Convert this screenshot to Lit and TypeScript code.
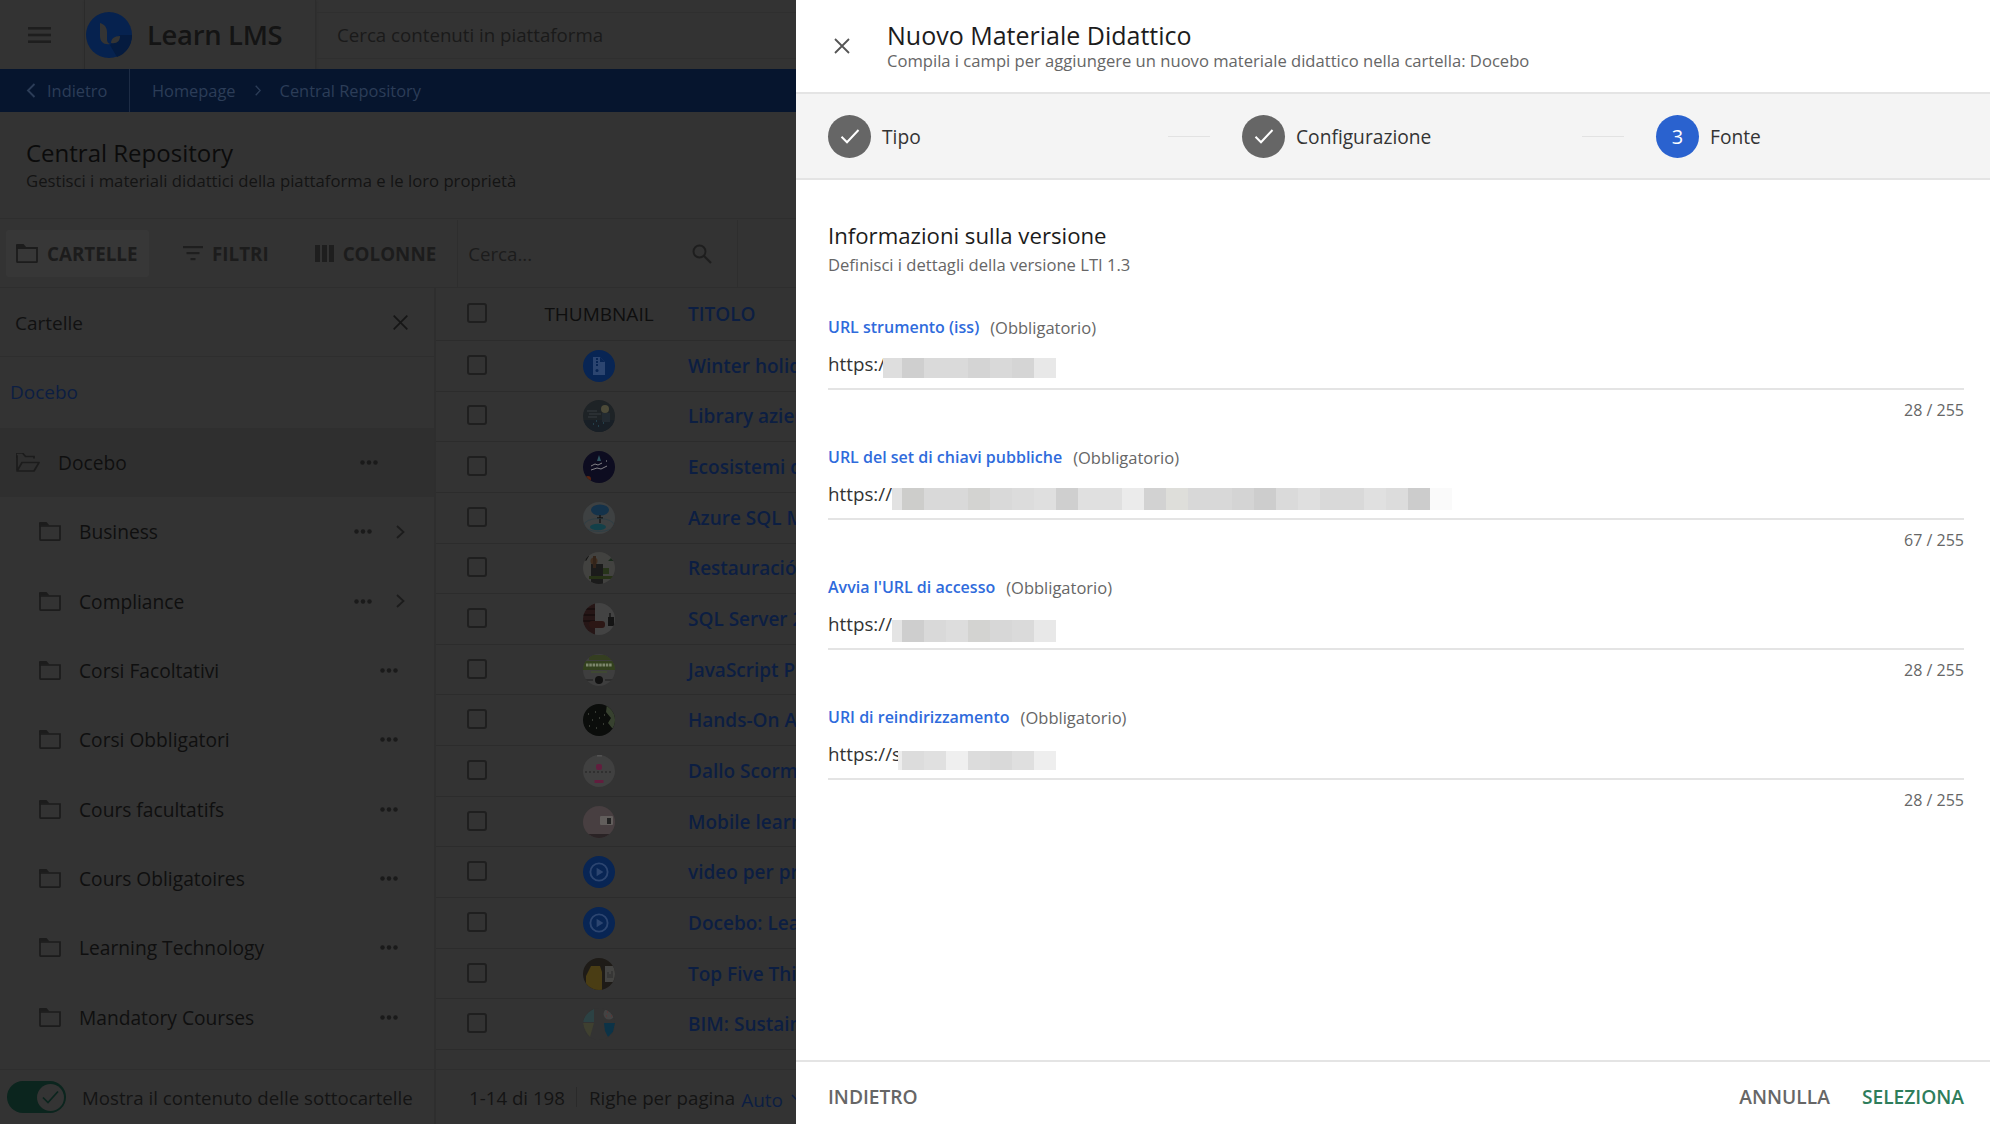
import { LitElement, html, css, svg } from 'lit';
import { customElement } from 'lit/decorators.js';

type Block = [number, string];

// pixelated blocks that cover the redacted part of each url
const field1: Block[] = [[19, '#dedede'], [22, '#cfcfcf'], [44, '#dadada'], [22, '#d4d4d4'], [22, '#d9d9d9'], [22, '#d5d5d5'], [22, '#e8e8e8']];
const field2: Block[] = [
  [10, '#e2e2e2'], [22, '#cdcdcb'], [44, '#d9d9d9'], [22, '#d3d3d1'], [22, '#d9d9d9'], [22, '#dcdcdc'], [22, '#dfdfdf'], [22, '#cfcfcf'],
  [44, '#e0e0e0'], [22, '#ebebeb'], [22, '#d2d2d2'], [22, '#dededa'], [44, '#d8d8d8'], [22, '#d4d4d4'], [22, '#cdcdcd'],
  [22, '#dadada'], [22, '#dfdfdf'], [44, '#d9d9d9'], [22, '#e0e0e0'], [22, '#dcdcdc'], [22, '#cccccc'], [22, '#fafafa'],
];
const field3: Block[] = [[10, '#e4e4e4'], [22, '#cecece'], [22, '#d9d9d9'], [22, '#dddddd'], [22, '#d3d3d1'], [22, '#d7d7d7'], [22, '#dadada'], [22, '#e8e8e8']];
const field4: Block[] = [[4, '#ededed'], [22, '#dcdcdc'], [22, '#e0e0e0'], [22, '#efefef'], [22, '#dcdcdc'], [22, '#d9d9d9'], [22, '#dfdfdf'], [22, '#eeeeee']];

const fields = [
  { label: 'URL strumento (iss)', value: 'https:/', clip: 55, blocks: field1, h: 20, down: 0, count: '28 / 255' },
  { label: 'URL del set di chiavi pubbliche', value: 'https://', clip: 64, blocks: field2, h: 22, down: 0, count: '67 / 255' },
  { label: "Avvia l'URL di accesso", value: 'https://', clip: 64, blocks: field3, h: 22, down: 2, count: '28 / 255' },
  { label: 'URI di reindirizzamento', value: 'https://s', clip: 70, blocks: field4, h: 19, down: 3, count: '28 / 255' },
];

const folders = ['Corsi Facoltativi', 'Corsi Obbligatori', 'Cours facultatifs', 'Cours Obligatoires', 'Learning Technology', 'Mandatory Courses'];

const playIcon = svg`<rect width="32" height="32" fill="#082554"/><circle cx="16" cy="16" r="8.600" fill="none" stroke="#2c4570" stroke-width="1.900"/><path d="M13.600 11.800 20.400 16l-6.800 4.200z" fill="#2c4570"/>`;

const rows = [
  { title: 'Winter holiday training', thumb: svg`<rect width="32" height="32" fill="#082554"/><path d="M10 7h7l5 5v13H10z" fill="#2c4570"/><path d="M17 7v5h5" fill="#082554"/><path d="M13 8h2v2h-2zm0 3h2v2h-2zm0 3h2v2h-2z" fill="#082554"/><circle cx="14" cy="20.500" r="1.500" fill="#082554"/>` },
  { title: 'Library aziendale', thumb: svg`<rect width="32" height="32" fill="#1e2326"/><rect y="20" width="32" height="12" fill="#181f26"/><circle cx="22" cy="9" r="4" fill="#4c4a38"/><rect x="19" y="13" width="8" height="9" fill="#222a31"/><path d="M4 11h10M6 14h12M5 17h9" stroke="#3c4248" stroke-width=".8"/><path d="M10 24h1M15 26h1M20 23h1M13 21h1" stroke="#2e5f6c" stroke-width="1"/>` },
  { title: 'Ecosistemi digitali', thumb: svg`<rect width="32" height="32" fill="#0d0c20"/><path d="M16 4l2 6h-4z" fill="#2f5560"/><path d="M8 15l4-2 3 1 4-2M8 19l6-2 4 1 6-3" stroke="#8e8e92" stroke-width=".9" fill="none"/><path d="M23 10h1" stroke="#999" stroke-width="1"/><circle cx="5" cy="28" r="3" fill="#5a2410"/>` },
  { title: 'Azure SQL Managed', thumb: svg`<rect width="32" height="32" fill="#3e4142"/><ellipse cx="17" cy="8" rx="9" ry="5.500" fill="#14324a"/><path d="M17 13v8M14 16h6" stroke="#141414" stroke-width="1.300"/><ellipse cx="15" cy="25" rx="8" ry="3.200" fill="#134049"/><ellipse cx="16" cy="23" rx="15" ry="6.500" fill="none" stroke="#2a3e46" stroke-width=".7"/>` },
  { title: 'Restauración', thumb: svg`<rect width="32" height="32" fill="#424240"/><path d="M2 8l3-5 1 1-3 5z" fill="#111"/><rect x="8" y="12" width="12" height="20" fill="#1b1b1b"/><circle cx="11" cy="9" r="3.500" fill="#3f2d1f"/><rect x="10" y="4" width="3" height="12" fill="#33241a"/><rect x="20" y="16" width="6" height="6" fill="#27341a"/><rect x="6" y="24" width="26" height="3" fill="#263116"/><path d="M25 9l3-3 3 3z" fill="#1a2a1c"/>` },
  { title: 'SQL Server 2019', thumb: svg`<rect width="32" height="32" fill="#434343"/><rect width="12" height="32" fill="#261616"/><path d="M0 6h12M0 12h12M0 18h12" stroke="#0f0909"/><rect x="6" y="18" width="16" height="7" rx="3" fill="#2c1715"/><rect x="25" y="14" width="6" height="9" fill="#141414"/><rect x="26" y="10" width="2" height="4" fill="#222"/>` },
  { title: 'JavaScript Pro', thumb: svg`<rect width="32" height="32" fill="#3e3e3e"/><rect x="6" y="1" width="25" height="5" fill="#343e20"/><rect y="7" width="32" height="9" fill="#33411e"/><path d="M3 11h26" stroke="#7c866c" stroke-width="3" stroke-dasharray="2.500 .8"/><rect x="8" y="17" width="16" height="2" fill="#3f4833"/><circle cx="16" cy="26" r="4" fill="#111"/><path d="M0 26h10M22 26h8" stroke="#1c1c1c"/>` },
  { title: 'Hands-On Azure', thumb: svg`<rect width="32" height="32" fill="#0b0d0b"/><path d="M24 0h8v24h-3l-4-5 3-5-5-6z" fill="#37412f"/><path d="M5 10h.8M12 8h.8M9 16h.8M16 14h.8M20 20h.8M13 24h.8M6 22h.8M21 11h.8" stroke="#85897a" stroke-width=".9"/>` },
  { title: 'Dallo Scorm', thumb: svg`<rect width="32" height="32" fill="#404040"/><rect x="14" y="0" width="5" height="1.500" fill="#555"/><rect x="13" y="9" width="6" height="6" rx="2" fill="#611e3e"/><path d="M2 17h28" stroke="#202020" stroke-dasharray="2 2" stroke-width="1.200"/><rect x="11.500" y="25" width="9" height="3" fill="#611e3e"/>` },
  { title: 'Mobile learning', thumb: svg`<rect width="32" height="32" fill="#483f41"/><rect y="28" width="32" height="4" fill="#2a2325"/><rect x="17" y="10" width="13" height="9" rx="1" fill="#625e5c"/><rect x="24" y="12" width="4" height="6" fill="#222"/>` },
  { title: 'video per presentazione', thumb: playIcon },
  { title: 'Docebo: Learning', thumb: playIcon },
  { title: 'Top Five Things', thumb: svg`<rect width="32" height="32" fill="#1e1b17"/><path d="M3 18l5-10h9l2 6v18H3z" fill="#4a3d14"/><rect x="22" y="8" width="10" height="16" fill="#444442"/><path d="M25 14v6M27 16v4M29 13v7" stroke="#2a2a2a"/>` },
  { title: 'BIM: Sustainable', thumb: svg`<rect width="32" height="32" fill="#333"/><path d="M11 1C6 3 1 8 0 14h11z" fill="#2c4244"/><path d="M0 15h11l-4 14C4 26 1 21 0 15z" fill="#3f4030"/><circle cx="26" cy="6" r="5.500" fill="#434343"/><path d="M24 4h1M27 3h1M28 8h1M23 8h1" stroke="#6a2a2a"/><path d="M21 15h11l-2 9-5 5-3-6z" fill="#0c3347"/>` },
];

const folderIcon = html`<svg class="folder" width="22" height="19" viewBox="0 0 22 19" fill="none"><path d="M1 4h20v13.500a.6.6 0 0 1-.6.6H1.600a.6.6 0 0 1-.6-.6z" stroke="#1c1c1c" stroke-width="1.700"/><path d="M0 5V1.200C0 .5.500 0 1.200 0h6.300l3 3.500H1.500L1 5z" fill="#1c1c1c"/></svg>`;
const folderOpen = html`<svg class="folder" width="24" height="19" viewBox="0 0 24 19" fill="none"><path d="M1 17V2.200" stroke="#1c1c1c" stroke-width="1.700"/><path d="M0 5V1.200C0 .5.500 0 1.200 0h5.300l3 3.500H18v2" fill="none" stroke="#1c1c1c" stroke-width="1.700"/><path d="M1 18h17l5-8.500H6z" stroke="#1c1c1c" stroke-width="1.700" stroke-linejoin="round"/></svg>`;
const dots = html`<svg class="dots" width="18" height="5" viewBox="0 0 18 5"><circle cx="2.500" cy="2.500" r="2.200"/><circle cx="9" cy="2.500" r="2.200"/><circle cx="15.500" cy="2.500" r="2.200"/></svg>`;
const chevron = html`<svg class="chev" width="9" height="14" viewBox="0 0 9 14" fill="none"><path d="M1 1l6.500 6L1 13" stroke="#1c1c1c" stroke-width="1.800"/></svg>`;
const stepCheck = html`<svg width="24" height="24" viewBox="0 0 24 24" fill="none"><path d="M3.500 12.800l5.500 5.500L20.500 6" stroke="#fff" stroke-width="2"/></svg>`;

@customElement('app-root')
export class AppRoot extends LitElement {
  static styles = css`
    :host {
      display: block;
      width: 1990px;
      height: 1124px;
      position: relative;
      overflow: hidden;
      font-family: 'Open Sans', 'Noto Sans', sans-serif;
      background: #333;
      color: #111;
    }

    .page {
      display: flex;
      flex-direction: column;
      height: 1124px;
    }

    /* top bar */
    .topbar {
      display: flex;
      height: 69px;
      flex: none;
    }
    .burger {
      width: 85px;
      border-right: 1px solid #2d2d2d;
      box-sizing: border-box;
      display: flex;
      align-items: center;
      padding-left: 28px;
    }
    .logo-box {
      width: 231px;
      display: flex;
      align-items: center;
      gap: 15px;
      padding-left: 1px;
      box-sizing: border-box;
      border-right: 1px solid #2d2d2d;
      box-shadow: 0 1px 2px #2a2a2a;
    }
    .logo-text {
      font-size: 27.400px;
      font-weight: 600;
      color: #141414;
      letter-spacing: -0.3px;
    }
    .top-search {
      flex: 1;
      margin-top: 12px;
      height: 47px;
      border-top: 1px solid #2f2f2f;
      border-bottom: 1px solid #2f2f2f;
      box-sizing: border-box;
      display: flex;
      align-items: center;
      padding: 0 0 2px 21px;
      font-size: 18.700px;
      color: #1a1a1a;
    }

    /* breadcrumb bar */
    .crumbs {
      height: 43px;
      flex: none;
      background: #06152e;
      display: flex;
      align-items: center;
      font-size: 16.400px;
      color: #2c3d58;
    }
    .back {
      width: 130px;
      height: 100%;
      border-right: 1px solid #1d2c45;
      display: flex;
      align-items: center;
      gap: 11px;
      padding-left: 26px;
      box-sizing: border-box;
    }
    .trail {
      display: flex;
      align-items: center;
      padding-left: 22px;
      gap: 19px;
    }

    /* page heading */
    .heading {
      height: 106px;
      flex: none;
      box-sizing: border-box;
      padding: 25px 0 0 26px;
    }
    .heading h1 {
      margin: 0;
      font-size: 24px;
      line-height: 32px;
      font-weight: 400;
      color: #0b0b0b;
    }
    .heading p {
      margin: 0;
      font-size: 16.700px;
      line-height: 24px;
      color: #141414;
    }

    /* toolbar */
    .toolbar {
      height: 70px;
      flex: none;
      display: flex;
      align-items: center;
      border-top: 1px solid #2e2e2e;
      border-bottom: 1px solid #2e2e2e;
      box-sizing: border-box;
      font-size: 18.800px;
      font-weight: 700;
      color: #1c1c1c;
      padding-top: 1px;
    }
    .tool {
      display: flex;
      align-items: center;
      height: 47px;
      gap: 9px;
      box-sizing: border-box;
    }
    .tool.active {
      width: 143px;
      margin-left: 6px;
      padding-left: 10px;
      background: #373737;
      border-radius: 2px;
    }
    .tool.filter {
      margin-left: 34px;
    }
    .tool.cols {
      margin-left: 46px;
    }
    .list-search {
      margin-left: 21px;
      width: 281px;
      height: 100%;
      box-sizing: border-box;
      border-left: 1px solid #2e2e2e;
      border-right: 1px solid #2e2e2e;
      display: flex;
      align-items: center;
      justify-content: space-between;
      padding: 0 25px 0 10px;
      font-size: 18.700px;
      font-weight: 400;
      color: #1c1c1c;
    }

    /* content below the toolbar */
    .main {
      flex: 1;
      display: flex;
      min-height: 0;
    }
    aside {
      width: 436px;
      flex: none;
      display: flex;
      flex-direction: column;
      border-right: 2px solid #2e2e2e;
      box-sizing: border-box;
    }
    .side-head {
      height: 69px;
      flex: none;
      display: flex;
      align-items: center;
      justify-content: space-between;
      padding: 1px 26px 0 15px;
      font-size: 19px;
      font-weight: 500;
      color: #111;
      border-bottom: 1px solid #2e2e2e;
      box-sizing: border-box;
    }
    .root-link {
      height: 70px;
      flex: none;
      display: flex;
      align-items: center;
      padding-left: 10px;
      font-size: 19px;
      color: #0c1e42;
      font-weight: 500;
    }
    .tree {
      flex: 1;
      padding-top: 1px;
    }
    .node {
      height: 69.300px;
      display: flex;
      align-items: center;
      padding-left: 39px;
      font-size: 19.200px;
      font-weight: 500;
      color: #0f0f0f;
    }
    .node.selected {
      background: #2f2f2f;
      padding-left: 16px;
    }
    .node .name {
      flex: 1;
      margin-left: 18px;
    }
    .dots {
      fill: #1a1a1a;
      margin-right: 36px;
    }
    .node.selected .dots {
      margin-right: 56px;
    }
    .node.more .dots {
      margin-right: 24px;
    }
    .chev {
      margin-right: 29px;
    }
    .side-foot {
      height: 55px;
      flex: none;
      display: flex;
      align-items: center;
      gap: 16px;
      padding-left: 7px;
      border-top: 1px solid #2e2e2e;
      box-sizing: border-box;
      font-size: 18.700px;
      color: #141414;
    }
    .switch {
      position: relative;
      width: 59px;
      height: 32px;
      border-radius: 16px;
      background: #0b251e;
    }
    .knob {
      position: absolute;
      right: 2px;
      top: 2.500px;
      width: 27px;
      height: 27px;
      border-radius: 50%;
      background: #343434;
      display: flex;
      align-items: center;
      justify-content: center;
    }

    /* table */
    .table {
      flex: 1;
      min-width: 0;
      overflow: hidden;
      display: flex;
      flex-direction: column;
    }
    .tr {
      display: grid;
      grid-template-columns: 100px 126px 1fr;
      align-items: center;
      border-bottom: 1px solid #2c2c2c;
      box-sizing: border-box;
      height: 50.650px;
      font-size: 19px;
      font-weight: 600;
      white-space: nowrap;
    }
    .tr.head {
      height: 53px;
    }
    .tr .title {
      padding-left: 26px;
      color: #0c1e42;
    }
    .tr.head .tn {
      color: #0e0e0e;
      text-align: center;
      font-weight: 500;
    }
    .check {
      width: 20px;
      height: 20px;
      margin-left: 31px;
      margin-top: -2px;
      box-sizing: border-box;
      border: 2.500px solid #1f1f1f;
      border-radius: 3px;
    }
    .thumb {
      width: 32px;
      height: 32px;
      border-radius: 50%;
      overflow: hidden;
      margin-left: 47px;
    }
    .thumb svg {
      display: block;
    }
    .spacer {
      flex: 1;
    }
    .table-foot {
      height: 55px;
      flex: none;
      display: flex;
      align-items: center;
      padding-left: 33px;
      border-top: 1px solid #2e2e2e;
      box-sizing: border-box;
      font-size: 18.700px;
      color: #141414;
      white-space: nowrap;
    }
    .pipe {
      width: 1px;
      height: 20px;
      background: #2a2a2a;
      margin: 0 12px 0 11px;
    }
    .auto {
      margin: 0 8px 0 6px;
      color: #0c1e42;
      font-weight: 500;
      font-size: 19px;
      padding-top: 6px;
    }

    /* drawer on top of the dimmed page */
    .drawer {
      position: absolute;
      top: 0;
      right: 0;
      bottom: 0;
      width: 1194px;
      background: #fff;
      color: #333;
      display: flex;
      flex-direction: column;
    }
    .drawer-head {
      height: 94px;
      flex: none;
      display: flex;
      align-items: center;
      border-bottom: 2px solid #e4e4e4;
      box-sizing: border-box;
    }
    .close {
      width: 91px;
      flex: none;
      display: flex;
      justify-content: center;
      padding-bottom: 1px;
    }
    .drawer-head h2 {
      margin: 0;
      font-size: 25px;
      line-height: 30px;
      font-weight: 400;
      color: #1c1c1c;
    }
    .drawer-head p {
      margin: 0;
      font-size: 16.600px;
      line-height: 22px;
      color: #666;
    }
    .stepper {
      height: 86px;
      flex: none;
      display: flex;
      align-items: center;
      padding-left: 32px;
      background: #f4f4f4;
      border-bottom: 2px solid #e4e4e4;
      box-sizing: border-box;
    }
    .step {
      display: flex;
      align-items: center;
      gap: 11px;
      width: 340px;
      flex: none;
      font-size: 19.200px;
      font-weight: 500;
      color: #333;
      padding-top: 1px;
    }
    .circle {
      width: 43px;
      height: 43px;
      border-radius: 50%;
      background: #666;
      display: flex;
      align-items: center;
      justify-content: center;
      color: #fff;
      font-size: 20px;
      font-weight: 400;
      margin-top: -1px;
    }
    .circle.now {
      background: #2a62cf;
    }
    .link {
      width: 42px;
      height: 1px;
      flex: none;
      margin-right: 32px;
      background: #e2e2e2;
    }
    .body {
      flex: 1;
      padding: 39px 26px 0 32px;
    }
    .body h3 {
      margin: 0;
      font-size: 22.200px;
      line-height: 34px;
      font-weight: 400;
      color: #1c1c1c;
    }
    .body > p {
      margin: 0 0 38px;
      font-size: 16.600px;
      line-height: 24px;
      color: #666;
    }
    .field {
      height: 130px;
      box-sizing: border-box;
    }
    .label {
      display: flex;
      gap: 11px;
      font-size: 16px;
      line-height: 25px;
      font-weight: 600;
      color: #2f6bdc;
    }
    .label span {
      color: #666;
      font-weight: 400;
      font-size: 16.500px;
    }
    .value {
      height: 50px;
      padding-top: 12px;
      box-sizing: border-box;
      display: flex;
      align-items: flex-start;
      border-bottom: 2px solid #e4e4e4;
      font-size: 18.800px;
      line-height: 24px;
      color: #333;
    }
    .url {
      flex: none;
      overflow: hidden;
      white-space: nowrap;
    }
    .pix {
      display: flex;
      margin-top: 6px;
    }
    .count {
      margin-top: 9px;
      text-align: right;
      font-size: 16px;
      line-height: 22px;
      color: #666;
    }
    .drawer-foot {
      height: 64px;
      flex: none;
      display: flex;
      align-items: center;
      padding: 7px 26px 0 32px;
      border-top: 2px solid #e4e4e4;
      box-sizing: border-box;
      font-size: 19.200px;
      font-weight: 600;
      color: #666;
    }
    .drawer-foot .grow {
      flex: 1;
    }
    .drawer-foot .ok {
      margin-left: 32px;
      color: #2e7d5b;
    }
  `;

  private _row(r: { title: string; thumb: unknown }) {
    return html`<div class="tr">
      <div class="check"></div>
      <div class="thumb"><svg width="32" height="32" viewBox="0 0 32 32">${r.thumb}</svg></div>
      <div class="title">${r.title}</div>
    </div>`;
  }

  private _field(f: (typeof fields)[number]) {
    return html`<div class="field">
      <div class="label">${f.label}<span>(Obbligatorio)</span></div>
      <div class="value">
        <div class="url" style="width:${f.clip}px">${f.value}</div>
        <div class="pix" style="height:${f.h}px;transform:translateY(${f.down}px)">
          ${f.blocks.map(([w, c]) => html`<div style="width:${w}px;background:${c}"></div>`)}
        </div>
      </div>
      <div class="count">${f.count}</div>
    </div>`;
  }

  render() {
    return html`
      <div class="page">
        <div class="topbar">
          <div class="burger">
            <svg width="23" height="16" viewBox="0 0 23 16" fill="#1e1e1e"><rect width="23" height="2.600"/><rect y="6.700" width="23" height="2.600"/><rect y="13.400" width="23" height="2.600"/></svg>
          </div>
          <div class="logo-box">
            <svg width="46" height="46" viewBox="0 0 46 46">
              <circle cx="23" cy="23" r="23" fill="#06224f"/>
              <path d="M24 33l7 12a23 23 0 0 0 15-22h-12z" fill="#051b3f"/>
              <path d="M14 11c4 1 7 4 7 9v7c0 3 1 4 3 5-6 1-10-2-10-8z" fill="#343434"/>
              <path d="M25 31c0-4 3-7 9-7 0 5-3 8-9 7z" fill="#343434"/>
            </svg>
            <span class="logo-text">Learn LMS</span>
          </div>
          <div class="top-search">Cerca contenuti in piattaforma</div>
        </div>

        <div class="crumbs">
          <div class="back">
            <svg width="10" height="15" viewBox="0 0 10 15" fill="none"><path d="M8.500 1L2 7.500 8.500 14" stroke="#2c3d58" stroke-width="1.900"/></svg>
            Indietro
          </div>
          <div class="trail">
            <span>Homepage</span>
            <svg width="6" height="11" viewBox="0 0 6 11" fill="none"><path d="M.7 .7l4.500 4.800L.7 10.300" stroke="#2c3d58" stroke-width="1.300"/></svg>
            <span>Central Repository</span>
          </div>
        </div>

        <div class="heading">
          <h1>Central Repository</h1>
          <p>Gestisci i materiali didattici della piattaforma e le loro proprietà</p>
        </div>

        <div class="toolbar">
          <div class="tool active">
            <svg width="22" height="19" viewBox="0 0 22 19" fill="none"><path d="M1 4h20v13.500a.6.6 0 0 1-.6.6H1.600a.6.6 0 0 1-.6-.6z" stroke="#1c1c1c" stroke-width="1.800"/><path d="M0 5V1.200C0 .5.500 0 1.200 0h6.300l3 3.500H1.500L1 5z" fill="#1c1c1c"/></svg>
            CARTELLE
          </div>
          <div class="tool filter">
            <svg width="20" height="15" viewBox="0 0 20 15" fill="#1e1e1e"><rect width="20" height="2.200"/><rect x="3.500" y="6" width="13" height="2.200"/><rect x="7.500" y="12" width="5" height="2.200"/></svg>
            FILTRI
          </div>
          <div class="tool cols">
            <svg width="19" height="17" viewBox="0 0 19 17" fill="#1e1e1e"><rect width="5" height="17"/><rect x="7" width="5" height="17"/><rect x="14" width="5" height="17"/></svg>
            COLONNE
          </div>
          <div class="list-search">
            <span>Cerca...</span>
            <svg width="20" height="20" viewBox="0 0 20 20" fill="none"><circle cx="7.500" cy="7.500" r="6" stroke="#1e1e1e" stroke-width="1.900"/><path d="M12 12l7 7" stroke="#1e1e1e" stroke-width="2.100"/></svg>
          </div>
        </div>

        <div class="main">
          <aside>
            <div class="side-head">
              Cartelle
              <svg width="15" height="15" viewBox="0 0 15 15" fill="none"><path d="M.7 .7l13.600 13.600M14.300 .7L.7 14.300" stroke="#161616" stroke-width="1.700"/></svg>
            </div>
            <div class="root-link">Docebo</div>
            <div class="tree">
              <div class="node selected">${folderOpen}<span class="name">Docebo</span>${dots}</div>
              <div class="node more">${folderIcon}<span class="name">Business</span>${dots}${chevron}</div>
              <div class="node more">${folderIcon}<span class="name">Compliance</span>${dots}${chevron}</div>
              ${folders.map((f) => html`<div class="node">${folderIcon}<span class="name">${f}</span>${dots}</div>`)}
            </div>
            <div class="side-foot">
              <div class="switch">
                <div class="knob">
                  <svg width="17" height="14" viewBox="0 0 17 14" fill="none"><path d="M1 7.500l5 5L16 1.500" stroke="#0b251e" stroke-width="1.700"/></svg>
                </div>
              </div>
              Mostra il contenuto delle sottocartelle
            </div>
          </aside>

          <div class="table">
            <div class="tr head">
              <div class="check"></div>
              <div class="tn">THUMBNAIL</div>
              <div class="title">TITOLO</div>
            </div>
            ${rows.map((r) => this._row(r))}
            <div class="spacer"></div>
            <div class="table-foot">
              1-14 di 198<span class="pipe"></span>Righe per pagina<span class="auto">Auto</span>
              <svg width="10" height="6" viewBox="0 0 10 6" fill="none"><path d="M1 1l4 4 4-4" stroke="#0c1e42" stroke-width="1.500"/></svg>
            </div>
          </div>
        </div>
      </div>

      <div class="drawer">
        <div class="drawer-head">
          <div class="close">
            <svg width="16" height="16" viewBox="0 0 16 16" fill="none"><path d="M1 1l14 14M15 1L1 15" stroke="#555" stroke-width="1.800"/></svg>
          </div>
          <div>
            <h2>Nuovo Materiale Didattico</h2>
            <p>Compila i campi per aggiungere un nuovo materiale didattico nella cartella: Docebo</p>
          </div>
        </div>

        <div class="stepper">
          <div class="step"><div class="circle">${stepCheck}</div>Tipo</div>
          <div class="link"></div>
          <div class="step"><div class="circle">${stepCheck}</div>Configurazione</div>
          <div class="link"></div>
          <div class="step"><div class="circle now">3</div>Fonte</div>
        </div>

        <div class="body">
          <h3>Informazioni sulla versione</h3>
          <p>Definisci i dettagli della versione LTI 1.3</p>
          ${fields.map((f) => this._field(f))}
        </div>

        <div class="drawer-foot">
          <span>INDIETRO</span>
          <span class="grow"></span>
          <span>ANNULLA</span>
          <span class="ok">SELEZIONA</span>
        </div>
      </div>
    `;
  }
}

declare global {
  interface HTMLElementTagNameMap {
    'app-root': AppRoot;
  }
}
